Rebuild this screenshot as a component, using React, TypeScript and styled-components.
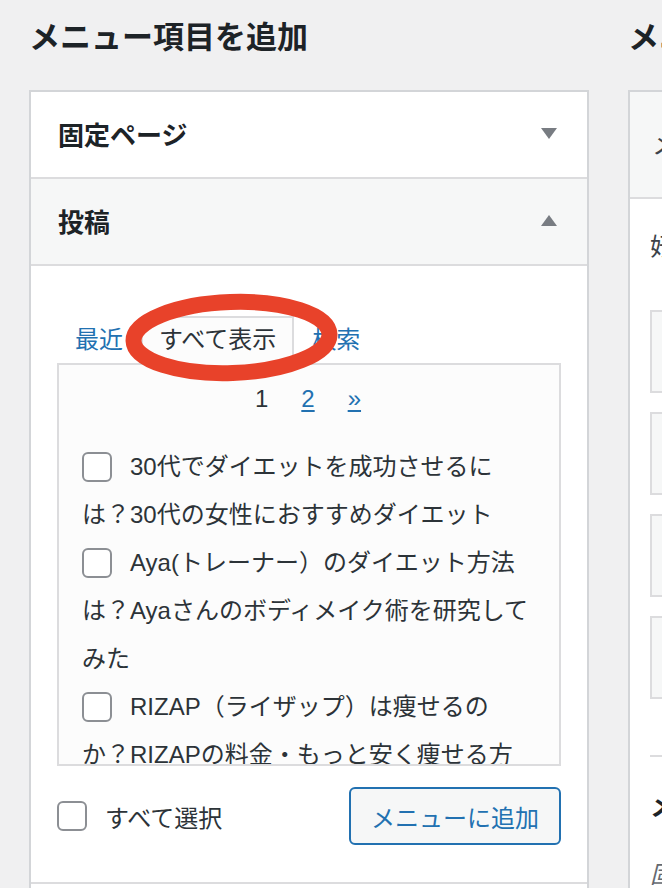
import styled, { createGlobalStyle } from 'styled-components';

const GlobalStyle = createGlobalStyle`
  html, body {
    margin: 0;
    padding: 0;
    background: #f0f0f1;
    overflow: hidden;
  }
  body {
    font-family: "Liberation Sans", "Noto Sans CJK JP", sans-serif;
    color: #2c3338;
  }
  * {
    box-sizing: border-box;
  }
`;

const Page = styled.div`
  display: flex;
  gap: 39px;
  padding-left: 29px;
  width: max-content;
`;

const Column = styled.div<{ $width: number }>`
  width: ${(p) => p.$width}px;
  flex-shrink: 0;
`;

const Title = styled.h2`
  margin: 0 0 32px;
  padding-top: 18px;
  font-size: 31px;
  line-height: 40px;
  font-weight: 600;
  color: #1d2327;
  white-space: nowrap;
`;

const Panel = styled.div`
  border: 2px solid #d3d5d8;
  background: #fff;
`;

const SectionHeader = styled.div<{ $open?: boolean }>`
  height: 87px;
  display: flex;
  align-items: center;
  justify-content: space-between;
  padding: 0 30px 2px 27px;
  font-size: 26px;
  font-weight: 600;
  color: #1d2327;
  background: ${(p) => (p.$open ? '#f6f7f7' : '#fff')};
  border-bottom: 2px solid #dcdcde;
`;

const Arrow = styled.span<{ $up?: boolean }>`
  width: 0;
  height: 0;
  border-left: 8px solid transparent;
  border-right: 8px solid transparent;
  ${(p) =>
    p.$up
      ? 'border-bottom: 11px solid #787c82;'
      : 'border-top: 11px solid #787c82;'}
`;

const SectionBody = styled.div`
  padding: 50px 26px 37px;
  border-bottom: 2px solid #dcdcde;
`;

const TabRow = styled.div`
  position: relative;
  display: flex;
`;

const Tab = styled.span<{ $active?: boolean }>`
  position: relative;
  z-index: 1;
  padding: 0 16px 3px;
  margin-bottom: -2px;
  font-size: 24px;
  line-height: 44px;
  border: 2px solid ${(p) => (p.$active ? '#dcdcde' : 'transparent')};
  border-bottom: none;
  background: ${(p) => (p.$active ? '#fcfcfc' : 'transparent')};
  color: ${(p) => (p.$active ? '#2c3338' : '#2271b1')};
`;

const Circle = styled.svg`
  position: absolute;
  left: 68px;
  top: -22px;
  z-index: 2;
  overflow: visible;
  pointer-events: none;
`;

const TabPanel = styled.div`
  height: 403px;
  border: 2px solid #dcdcde;
  background: #fcfcfc;
  overflow: hidden;
  padding: 16px 25px 0 23px;
`;

const Pager = styled.div`
  display: flex;
  justify-content: center;
  gap: 33px;
  font-size: 24px;
  line-height: 36px;
  color: #2c3338;
`;

const PageLink = styled.a`
  color: #2271b1;
  text-decoration: underline;
  text-underline-offset: 3px;
`;

const List = styled.div`
  margin-top: 26px;
`;

const Item = styled.label`
  display: block;
  font-size: 24px;
  line-height: 48px;
  color: #2c3338;
`;

const Check = styled.input.attrs({ type: 'checkbox' })`
  appearance: none;
  display: inline-block;
  width: 30px;
  height: 30px;
  margin: 0 18px 0 0;
  border: 2px solid #8c8f94;
  border-radius: 6px;
  background: #fff;
  vertical-align: middle;
  position: relative;
  top: -2px;
`;

const Footer = styled.div`
  display: flex;
  justify-content: space-between;
  align-items: center;
  margin-top: 21px;
`;

const SelectAll = styled.label`
  display: flex;
  align-items: center;
  font-size: 24px;
  color: #2c3338;

  input {
    top: 0;
  }
`;

const AddButton = styled.button`
  height: 58px;
  padding: 0 20px;
  border: 2px solid #2271b1;
  border-radius: 6px;
  background: #f6f7f7;
  color: #2271b1;
  font-family: inherit;
  font-size: 24px;
`;

const RightHeader = styled.div`
  height: 107px;
  display: flex;
  align-items: center;
  padding: 0 22px 4px;
  background: #f6f7f7;
  border-bottom: 2px solid #dcdcde;
  font-size: 26px;
  color: #3c434a;
  white-space: nowrap;
`;

const RightBody = styled.div`
  padding: 30px 0 0 20px;
`;

const Hint = styled.p`
  margin: 0 0 45px;
  font-size: 24px;
  line-height: 36px;
  color: #3c434a;
  white-space: nowrap;
`;

const MenuItem = styled.div`
  height: 83px;
  margin-bottom: 19px;
  border: 2px solid #dcdcde;
  background: #f6f7f7;
  display: flex;
  align-items: center;
  padding: 0 22px;
  font-size: 24px;
  font-weight: 600;
  color: #1d2327;
  white-space: nowrap;
`;

const Settings = styled.div`
  margin-top: 56px;
  border-top: 2px solid #dcdcde;
  padding-top: 32px;
`;

const SettingsTitle = styled.h3`
  margin: 0;
  font-size: 26px;
  line-height: 36px;
  font-weight: 600;
  color: #1d2327;
  white-space: nowrap;
`;

const SettingsLabel = styled.div`
  margin-top: 32px;
  font-size: 24px;
  line-height: 36px;
  font-style: italic;
  color: #646970;
  white-space: nowrap;
`;

const posts = [
  '30代でダイエットを成功させるには？30代の女性におすすめダイエット',
  'Aya(トレーナー）のダイエット方法は？Ayaさんのボディメイク術を研究してみた',
  'RIZAP（ライザップ）は痩せるのか？RIZAPの料金・もっと安く痩せる方法',
  'ダイエット中の食事は何を食べる？おすすめの食材とレシピ',
];

const menuItems = ['ホーム', 'サービス', 'ブログ', 'お問い合わせ'];

const App = () => {
  return (
    <>
      <GlobalStyle />
      <Page>
        <Column $width={560}>
          <Title>メニュー項目を追加</Title>
          <Panel>
            <SectionHeader>
              固定ページ
              <Arrow />
            </SectionHeader>
            <SectionHeader $open>
              投稿
              <Arrow $up />
            </SectionHeader>
            <SectionBody>
              <TabRow>
                <Tab>最近</Tab>
                <Tab $active>すべて表示</Tab>
                <Tab>検索</Tab>
                <Circle width="213" height="87" viewBox="0 0 213 87">
                  <ellipse
                    cx="106.5"
                    cy="43.5"
                    rx="98"
                    ry="35.5"
                    fill="none"
                    stroke="#e8422a"
                    strokeWidth="16"
                    transform="rotate(-2 106.5 43.5)"
                  />
                </Circle>
              </TabRow>
              <TabPanel>
                <Pager>
                  <span>1</span>
                  <PageLink>2</PageLink>
                  <PageLink>»</PageLink>
                </Pager>
                <List>
                  {posts.map((p) => (
                    <Item key={p}>
                      <Check />
                      {p}
                    </Item>
                  ))}
                </List>
              </TabPanel>
              <Footer>
                <SelectAll>
                  <Check />
                  すべて選択
                </SelectAll>
                <AddButton>メニューに追加</AddButton>
              </Footer>
            </SectionBody>
            <SectionHeader>
              カスタムリンク
              <Arrow />
            </SectionHeader>
          </Panel>
        </Column>
        <Column $width={600}>
          <Title>メニュー構造</Title>
          <Panel>
            <RightHeader>メニュー名</RightHeader>
            <RightBody>
              <Hint>好きな順番に各項目をドラッグしてください。</Hint>
              {menuItems.map((m) => (
                <MenuItem key={m}>{m}</MenuItem>
              ))}
              <Settings>
                <SettingsTitle>メニュー設定</SettingsTitle>
                <SettingsLabel>固定ページを自動追加</SettingsLabel>
              </Settings>
            </RightBody>
          </Panel>
        </Column>
      </Page>
    </>
  );
};

export default App;
